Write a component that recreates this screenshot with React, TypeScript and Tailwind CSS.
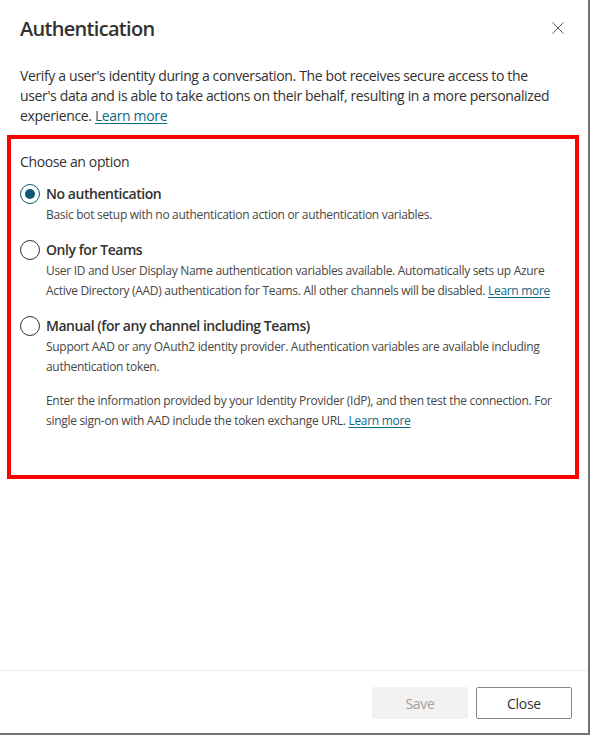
import React from "react";

function Radio({ checked }: { checked?: boolean }) {
  return (
    <span
      className={
        "flex h-5 w-5 shrink-0 items-center justify-center rounded-full border bg-white " +
        (checked ? "border-[#0b5a70]" : "border-[#323130]")
      }
    >
      {checked ? <span className="h-[10px] w-[10px] rounded-full bg-[#0b5a70]" /> : null}
    </span>
  );
}

function Option({
  checked,
  label,
  children,
  className,
}: {
  checked?: boolean;
  label: string;
  children: React.ReactNode;
  className?: string;
}) {
  return (
    <div className={"flex flex-col " + (className ?? "")}>
      <div className="flex items-center gap-[6px] h-5">
        <Radio checked={checked} />
        <span className="text-[14px] leading-5 font-semibold tracking-[-0.45px] text-[#323130]">{label}</span>
      </div>
      <div className="mt-px pl-[26px] whitespace-nowrap text-[12px] leading-5 tracking-[-0.3px] text-[#484644]">
        {children}
      </div>
    </div>
  );
}

function Link({ children }: { children: React.ReactNode }) {
  return <a className="text-[#0f6a87] underline underline-offset-2 cursor-pointer">{children}</a>;
}

export default function App() {
  return (
    <div className="flex h-[735px] w-[590px] flex-col border-r-2 border-b-2 border-[#737373] bg-white font-['Open_Sans',sans-serif] text-[#323130]">
      <div className="flex items-center justify-between pt-[15px] pl-5 pr-6">
        <h1 className="text-[20px] leading-7 font-semibold tracking-[-0.7px] text-[#323130]">Authentication</h1>
        <svg width="12" height="12" viewBox="0 0 12 12" className="mt-[-2px]">
          <path d="M0.5 0.5 L11.5 11.5 M11.5 0.5 L0.5 11.5" stroke="#605e5c" strokeWidth="1" fill="none" />
        </svg>
      </div>

      <p className="mt-[23px] px-5 whitespace-nowrap text-[14px] leading-5 tracking-[-0.36px] text-[#323130]">
        Verify a user's identity during a conversation. The bot receives secure access to the
        <br />
        user's data and is able to take actions on their behalf, resulting in a more personalized
        <br />
        experience. <Link>Learn more</Link>
      </p>

      <div className="mt-[9px] ml-[7px] w-[572px] border-4 border-[#ff0000] pl-[9px] pt-[13px] pb-[44px]">
        <div className="text-[14px] leading-5 tracking-[-0.36px] text-[#323130]">Choose an option</div>

        <Option checked label="No authentication" className="mt-[12px]">
          Basic bot setup with no authentication action or authentication variables.
        </Option>

        <Option label="Only for Teams" className="mt-[15px]">
          User ID and User Display Name authentication variables available. Automatically sets up Azure
          <br />
          Active Directory (AAD) authentication for Teams. All other channels will be disabled.{" "}
          <Link>Learn more</Link>
        </Option>

        <Option label="Manual (for any channel including Teams)" className="mt-[15px]">
          Support AAD or any OAuth2 identity provider. Authentication variables are available including
          <br />
          authentication token.
        </Option>

        <p className="mt-[14px] pl-[26px] whitespace-nowrap text-[12px] leading-5 tracking-[-0.3px] text-[#484644]">
          Enter the information provided by your Identity Provider (IdP), and then test the connection. For
          <br />
          single sign-on with AAD include the token exchange URL. <Link>Learn more</Link>
        </p>
      </div>

      <div className="flex-1" />

      <div className="flex justify-end gap-2 border-t border-[#edebe9] pt-4 pb-[14px] pr-4">
        <button className="h-8 w-24 rounded-[2px] bg-[#f3f2f1] text-[14px] tracking-[-0.3px] text-[#a19f9d]">
          Save
        </button>
        <button className="h-8 w-24 rounded-[2px] border border-[#8a8886] bg-white text-[14px] tracking-[-0.3px] text-[#323130]">
          Close
        </button>
      </div>
    </div>
  );
}
